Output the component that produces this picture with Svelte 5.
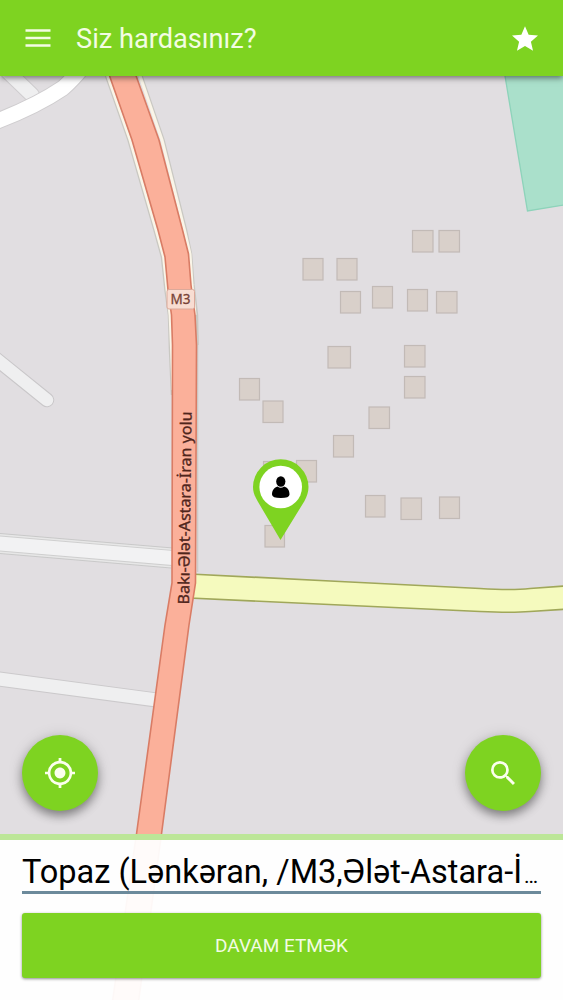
<script lang="ts">
  let address = $state('Topaz (Lənkəran, /M3,Ələt-Astara-İ');

  // x, y, width of each building footprint
  const buildings = [
    [412, 230, 21], [438.5, 230, 21],
    [302.5, 258, 20.5], [336.5, 258, 20.5],
    [340, 291, 20.5], [372, 286, 20.5], [407, 289, 20.5], [436, 291, 21],
    [327.5, 346, 23], [404, 345, 21], [404, 376, 21],
    [239, 378, 20.5], [262.5, 400.5, 20.5],
    [368.5, 406.5, 21], [333, 435, 20.5],
    [296, 460, 20.5], [263, 461, 20.5],
    [365, 495, 20], [400.5, 497.5, 21], [439, 496.5, 20.5],
    [264.5, 525, 20],
  ];
</script>

<div class="screen">
  <svg class="map" viewBox="0 0 563 1000" width="563" height="1000">
    <rect width="563" height="1000" fill="#e1dee1" />
    <path d="M504 70 L527.500 211 L570 204 V70Z" fill="#aae0cb" stroke="#8dd3ba" stroke-width="1.300" />

    {#each buildings as [x, y, w]}
      <rect x={x + 0.5} y={y + 0.5} width={w - 0.5} height="21.500" fill="#d9d0ca" stroke="#c2bab6" stroke-width="1.200" />
    {/each}

    <!-- side streets -->
    <g fill="none" stroke-linecap="round" stroke-linejoin="round">
      <path d="M2 66 L32 95" stroke="#cfcdcf" stroke-width="16" />
      <path d="M2 66 L32 95" stroke="#efeff0" stroke-width="14" />
      <path d="M-8 123 Q35 107 63 88 Q72 80 82 68" stroke="#cfcdcf" stroke-width="17" />
      <path d="M-8 123 Q35 107 63 88 Q72 80 82 68" stroke="#fff" stroke-width="15" />
      <path d="M-10 354 L47 400" stroke="#c9c7c9" stroke-width="14.500" />
      <path d="M-10 354 L47 400" stroke="#efeff0" stroke-width="12.500" />
    </g>
    <g fill="none">
      <path d="M-5 543 L172 558" stroke="#c9c9c9" stroke-width="21" />
      <path d="M-5 543 L172 558" stroke="#e7e7e7" stroke-width="19" />
      <path d="M-5 543 L172 558" stroke="#cfcfcf" stroke-width="16" />
      <path d="M-5 543 L173 558" stroke="#f2f2f3" stroke-width="14" />
      <path d="M-5 678.500 L156 700" stroke="#cbc9cb" stroke-width="15" />
      <path d="M-5 678.500 L157 700" stroke="#efeff0" stroke-width="13" />
    </g>

    <path
      d="M190 574 L340 581.500 L480 588.500 Q512 590.500 530 588.500 L570 585.500 V609 L530 611.500 Q512 613 480 611.500 L340 605 L190 598Z"
      fill="#f5fabe" stroke="#a0a75a" stroke-width="1.700" />

    <!-- M3 highway -->
    <g fill="none">
      <path d="M104.500 70 L129 140 L155 230 L162.500 257 L166 290 L169.500 315 L170.500 350 L172.500 395" stroke="#c9c8c2" stroke-width="3.500" />
      <path d="M105.500 70 L130 140 L156 230 L163.500 257 L167 290 L170 315 L171.500 350 L173 390" stroke="#faf5e8" stroke-width="2.800" />
      <path d="M139 70 L163 140 L185.500 230 L190.500 254 L193 285 L196.500 315 L197 345" stroke="#c9c8c2" stroke-width="3.500" />
      <path d="M138 70 L162 140 L184.500 230 L190 254 L192 285 L195 315" stroke="#faf5e8" stroke-width="3" />
      <path d="M197.700 335 V572" stroke="#cbcac6" stroke-width="1.200" />
    </g>
    <path
      d="M107.500 70 L132 140 L158 230 L165 257 L168 290 L171.500 315 L172.500 345 L172 583 L165 625 L136.500 834 L112 1005 H138 L161.500 834 L189 625 L195.500 583 L196.500 345 L195 315 L191 285 L188.500 254 L182.500 230 L159 140 L134 70Z"
      fill="#fbb09a" stroke="#d97c65" stroke-width="1.600" />

    <rect x="167" y="289.500" width="27.500" height="19.500" rx="2" fill="#f8ddd2" stroke="#dca99a" />
    <text class="ref" x="180.500" y="304" text-anchor="middle">M3</text>
    <text class="road" transform="translate(189 604.500) rotate(-89.200)" textLength="193" lengthAdjust="spacingAndGlyphs">Bakı-Ələt-Astara-İran yolu</text>

    <!-- location pin -->
    <path d="M280.500 540 L257.500 501 C254.500 496 253 492 253 487 A27.700 27.700 0 0 1 308.500 487 C308.500 492 307 496 304.500 501Z" fill="#7ed321" />
    <circle cx="280.700" cy="487" r="21.300" fill="#fff" />
    <ellipse cx="280.800" cy="481.500" rx="4.600" ry="5.300" />
    <path d="M272 494.500 C272 490 274.500 487.500 277.500 486.500 Q280.800 489 284 486.500 C287.500 487.500 289.500 490 289.500 494.500 Q289.500 498 280.800 498 T272 494.500Z" />
  </svg>

  <header>
    <button class="icon-button" aria-label="Menyu">
      <svg viewBox="0 0 26 18" width="26" height="18" fill="none" stroke="#f3fce3" stroke-width="2.700">
        <path d="M0.500 1.500H25.500M0.500 9H25.500M0.500 16.500H25.500" />
      </svg>
    </button>
    <h1>Siz hardasınız?</h1>
    <button class="icon-button" aria-label="Seçilmişlər">
      <svg viewBox="2 2 20 19" width="26" height="25" fill="#fff">
        <path d="M12 17.270L18.180 21l-1.640-7.030L22 9.240l-7.190-.610L12 2 9.190 8.630 2 9.240l5.460 4.730L5.820 21z" />
      </svg>
    </button>
  </header>

  <main>
    <button class="fab" aria-label="Yerim">
      <svg viewBox="1 1 22 22" width="30" height="30" fill="#fbffed">
        <path d="M12 8c-2.210 0-4 1.790-4 4s1.790 4 4 4 4-1.790 4-4-1.790-4-4-4zm8.940 3A8.994 8.994 0 0 0 13 3.060V1h-2v2.060A8.994 8.994 0 0 0 3.060 11H1v2h2.060A8.994 8.994 0 0 0 11 20.940V23h2v-2.060A8.994 8.994 0 0 0 20.940 13H23v-2h-2.060zM12 19c-3.870 0-7-3.130-7-7s3.130-7 7-7 7 3.130 7 7-3.130 7-7 7z" />
      </svg>
    </button>
    <button class="fab" aria-label="Axtar">
      <svg viewBox="3 3 17.500 17.500" width="24" height="24" fill="#fbffed">
        <path d="M15.500 14h-.790l-.280-.270A6.471 6.471 0 0 0 16 9.500 6.500 6.500 0 1 0 9.500 16c1.610 0 3.090-.590 4.230-1.570l.270.280v.790l5 4.990L20.490 19l-4.990-5zm-6 0C7.010 14 5 11.990 5 9.500S7.010 5 9.500 5 14 7.010 14 9.500 11.990 14 9.500 14z" />
      </svg>
    </button>
  </main>

  <footer>
    <div class="address"><span>{address}</span><span class="more">…</span></div>
    <button class="submit">DAVAM ETMƏK</button>
  </footer>
</div>

<style>
:global(body) {
  margin: 0;
}
.screen {
  position: relative;
  display: flex;
  flex-direction: column;
  width: 563px;
  height: 1000px;
  overflow: hidden;
  font-family: Roboto, sans-serif;
}
.map {
  position: absolute;
  top: 0;
  left: 0;
}
.ref {
  font: 13.5px "Noto Sans", sans-serif;
  fill: #784337;
  stroke: #784337;
  stroke-width: 0.3px;
}
.road {
  font: 15.5px "Noto Sans", sans-serif;
  fill: #4f251c;
  stroke: #4f251c;
  stroke-width: 0.3px;
}
header, main, footer {
  position: relative;
  box-sizing: border-box;
}
button {
  border: 0;
  padding: 0;
  font-family: inherit;
  cursor: pointer;
}
header {
  display: flex;
  align-items: center;
  height: 76px;
  padding: 0 25px 0 25px;
  background: #7ed321;
  box-shadow: 0 2px 6px rgba(0, 0, 0, 0.5);
}
.icon-button {
  display: flex;
  background: none;
}
h1 {
  flex: 1;
  margin: 0 0 0 25px;
  padding-top: 1px;
  font-size: 27.2px;
  font-weight: 400;
  color: #f3fce3;
}
main {
  display: flex;
  flex: 1;
  align-items: flex-end;
  justify-content: space-between;
  padding: 0 22px 23px;
}
.fab {
  display: flex;
  align-items: center;
  justify-content: center;
  width: 76px;
  height: 76px;
  border-radius: 50%;
  background: #7ed321;
  box-shadow: 0 5px 10px rgba(0, 0, 0, 0.38), 0 1px 16px rgba(0, 0, 0, 0.12);
}
footer {
  height: 166px;
  padding: 12px 22px 22px;
  border-top: 6px solid #bce698;
  background: rgba(255, 255, 255, 0.95);
  background-clip: padding-box;
}
.address {
  display: flex;
  align-items: baseline;
  height: 39px;
  border-bottom: 3px solid #6c8a9b;
  font-size: 32.5px;
  line-height: 40px;
  color: #000;
  white-space: nowrap;
}
.more {
  margin-left: 2px;
  font-size: 21px;
}
.submit {
  display: block;
  width: 100%;
  height: 65px;
  margin-top: 19px;
  border-radius: 3px;
  background: #7ed321;
  box-shadow: 0 1px 3px rgba(0, 0, 0, 0.45);
  font-size: 19px;
  color: #f3fce3;
}
</style>
